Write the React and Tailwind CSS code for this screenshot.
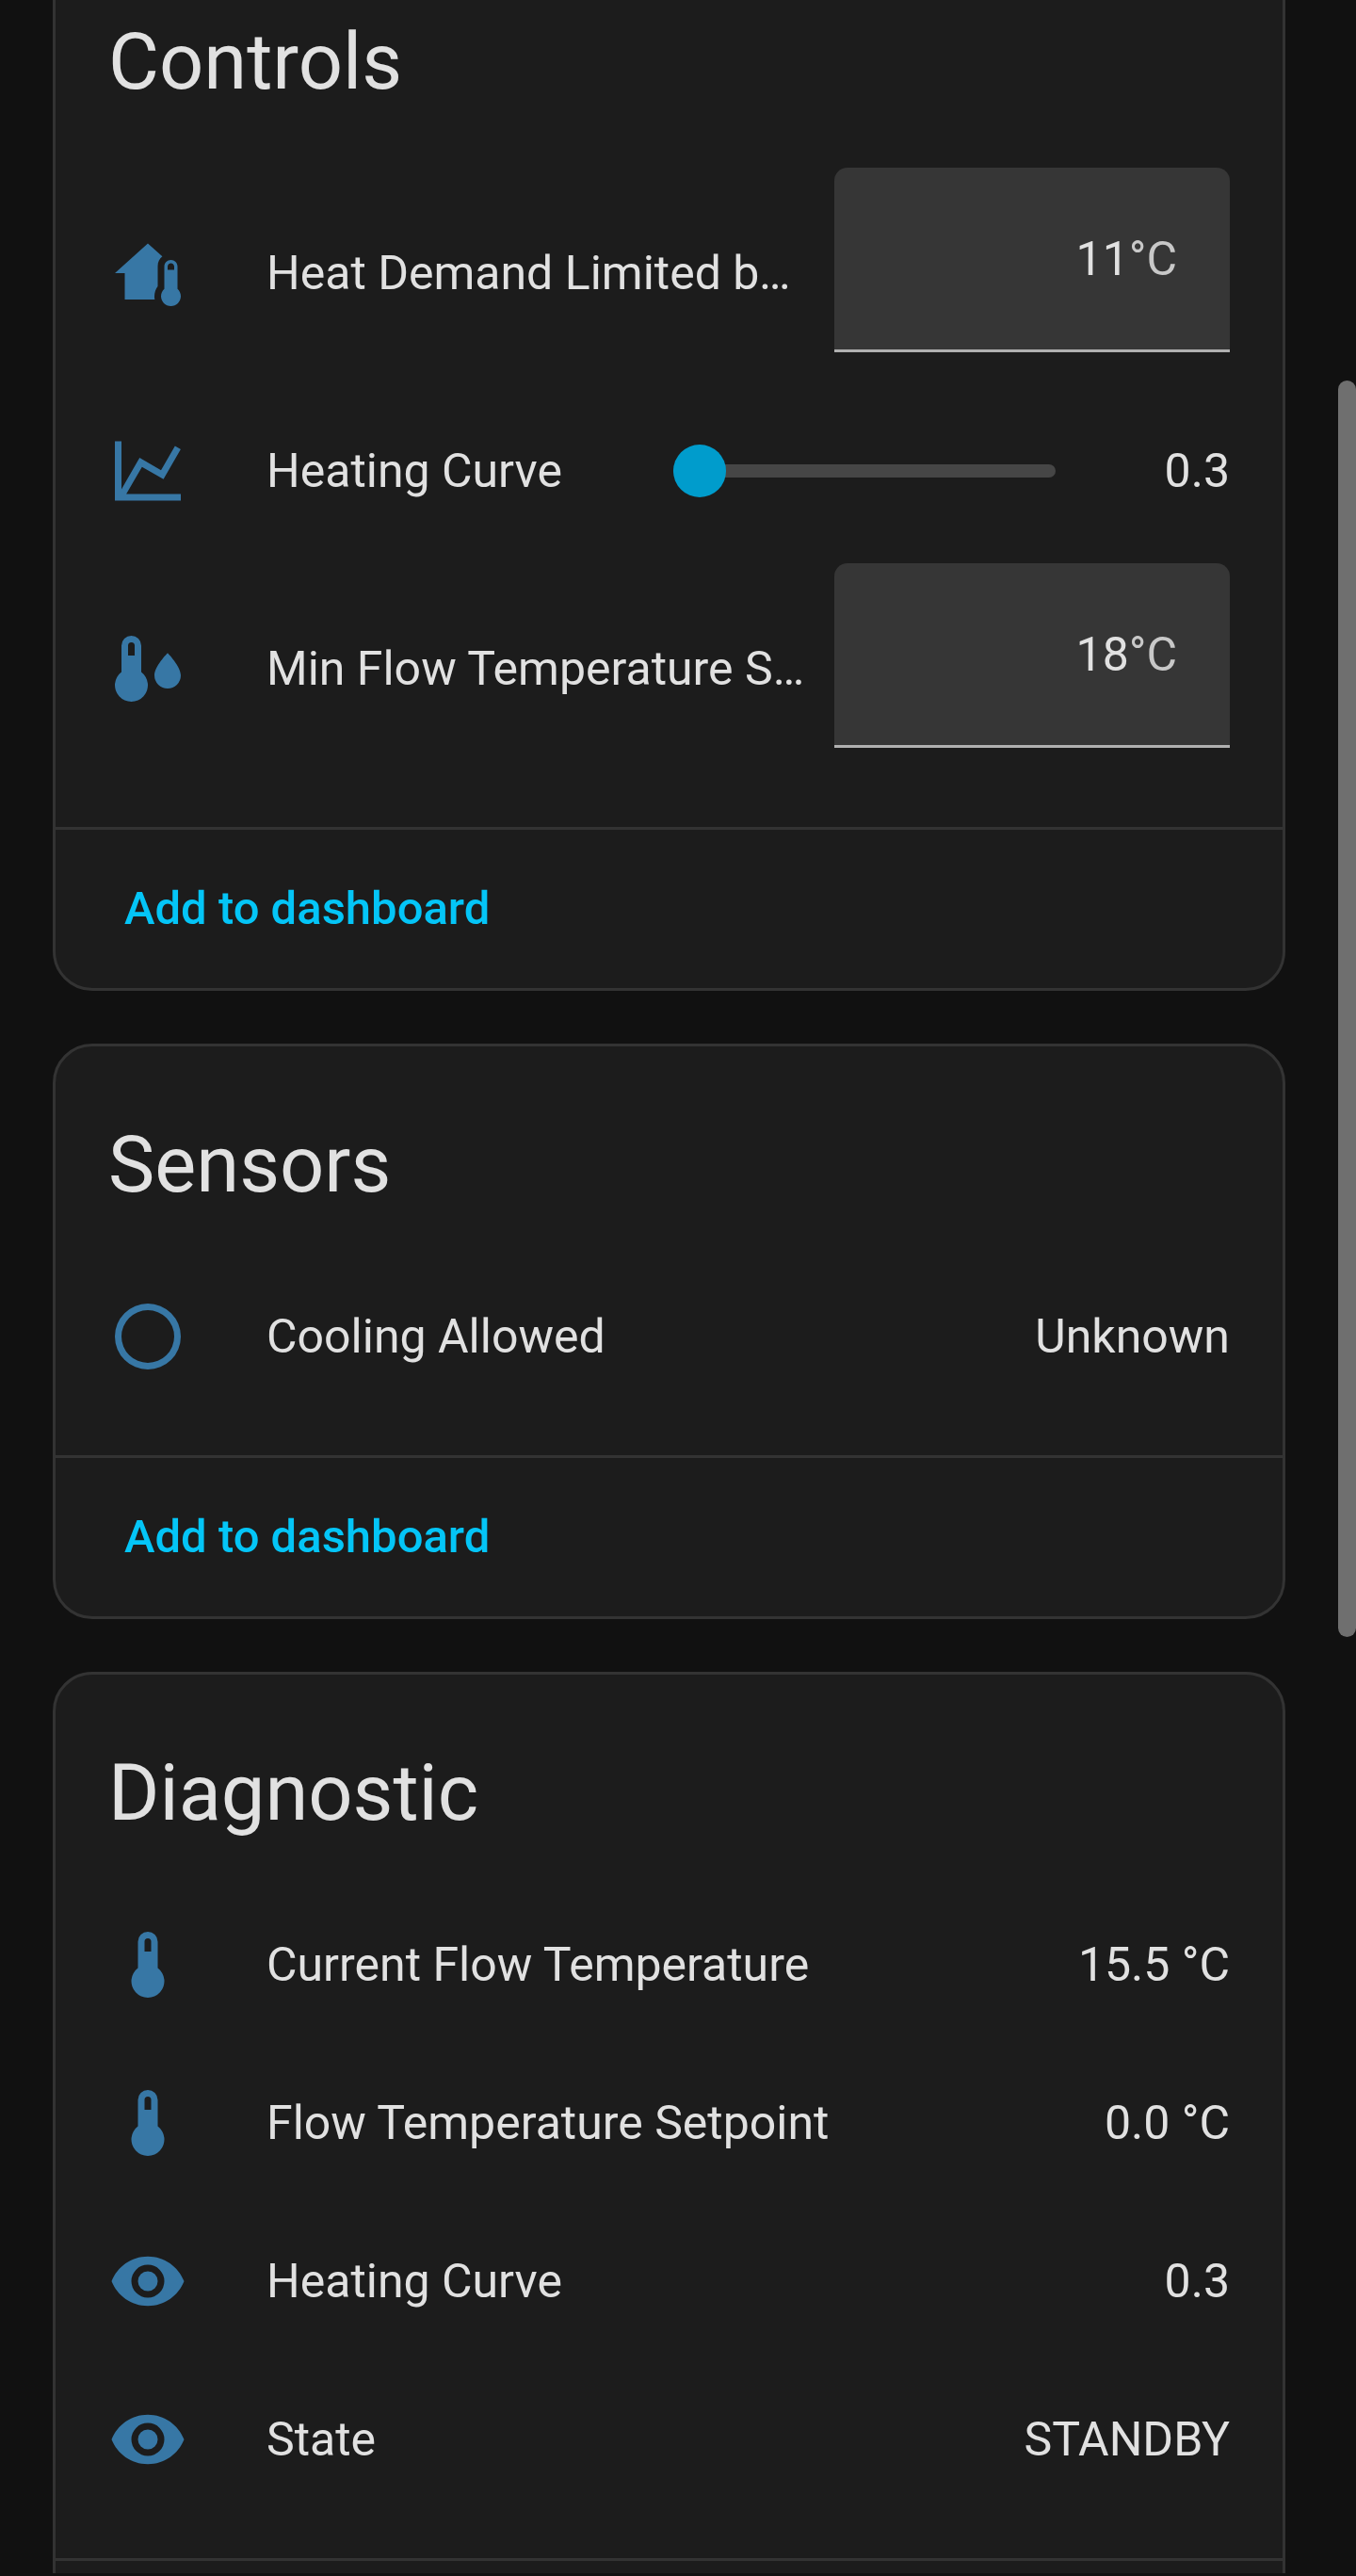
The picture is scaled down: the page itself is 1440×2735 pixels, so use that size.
import { useState } from "react";

/* ================= ICONS ================= */

const ICONS = {
  homeThermometer:
    "M19 8C20.11 8 21 8.9 21 10V16.76C21.61 17.31 22 18.11 22 19C22 20.66 20.66 22 19 22C17.34 22 16 20.66 16 19C16 18.11 16.39 17.31 17 16.76V10C17 8.9 17.9 8 19 8M19 9C18.45 9 18 9.45 18 10V11H20V10C20 9.45 19.55 9 19 9M12 3L2 12H5V20H14.1C14 19.7 14 19.3 14 19C14 17.9 14.4 16.8 15 16V10C15 8.7 15.5 7.6 16.4 6.96L12 3Z",
  chartLine:
    "M16 11.78L20.24 4.45L21.97 5.45L16.74 14.5L10.23 10.75L5.46 19H22V21H2V3H4V17.54L9.5 8L16 11.78Z",
  thermometerWater:
    "M10 13V5A3 3 0 0 0 4 5V13A5 5 0 1 0 10 13M7 4A1 1 0 0 1 8 5V8H6V5A1 1 0 0 1 7 4M18 7.2C18 7.2 14 11.3 14 14A4 4 0 0 0 22 14C22 11.3 18 7.2 18 7.2Z",
  circle:
    "M12 20A8 8 0 0 1 4 12A8 8 0 0 1 12 4A8 8 0 0 1 20 12A8 8 0 0 1 12 20M12 2A10 10 0 0 0 2 12A10 10 0 0 0 12 22A10 10 0 0 0 22 12A10 10 0 0 0 12 2Z",
  thermometer:
    "M15 13V5A3 3 0 0 0 9 5V13A5 5 0 1 0 15 13M12 4A1 1 0 0 1 13 5V8H11V5A1 1 0 0 1 12 4Z",
  eye: "M12 9A3 3 0 0 0 9 12A3 3 0 0 0 12 15A3 3 0 0 0 15 12A3 3 0 0 0 12 9M12 17A5 5 0 0 1 7 12A5 5 0 0 1 12 7A5 5 0 0 1 17 12A5 5 0 0 1 12 17M12 4.5C7 4.5 2.73 7.61 1 12C2.73 16.39 7 19.5 12 19.5C17 19.5 21.27 16.39 23 12C21.27 7.61 17 4.5 12 4.5Z",
};

function Icon({ name }) {
  return (
    <svg
      viewBox="0 0 24 24"
      aria-hidden="true"
      className="mr-[84px] size-[84px] shrink-0 fill-[#3777a5]"
    >
      <path fillRule="evenodd" d={ICONS[name]} />
    </svg>
  );
}

/* ================= CARD ================= */

function Card({ title, action, children }) {
  return (
    <section className="rounded-[42px] border-3 border-[#333333] bg-[#1c1c1c]">
      <h2 className="px-14 pt-[42px] pb-7 text-[83px] leading-[168px]">
        {title}
      </h2>
      <div className="flex flex-col gap-7 px-14 pb-14">{children}</div>
      <div className="flex min-h-[171px] items-center border-t-3 border-[#333333] px-7">
        {action && (
          <button
            type="button"
            className="h-[126px] cursor-pointer rounded-full px-[45px] text-[49px] font-medium text-[#04c5f7]"
          >
            {action}
          </button>
        )}
      </div>
    </section>
  );
}

/* ================= ROWS ================= */

function StateRow({ icon, name, value }) {
  return (
    <div className="flex h-[140px] items-center">
      <Icon name={icon} />
      <span className="min-w-0 flex-1 truncate">{name}</span>
      <span className="ml-7">{value}</span>
    </div>
  );
}

function NumberRow({ id, icon, name, unit, initial }) {
  const [value, setValue] = useState(initial);

  return (
    <div className="flex h-[224px] items-center">
      <Icon name={icon} />
      <label htmlFor={id} className="min-w-0 flex-1 truncate">
        {name}
      </label>
      <div className="ml-7 flex h-[196px] w-[420px] shrink-0 items-center self-start rounded-t-[14px] border-b-3 border-[#b0b0b0] bg-[#363636] px-14">
        <input
          id={id}
          type="text"
          inputMode="numeric"
          value={value}
          onChange={(e) => setValue(e.target.value)}
          className="min-w-0 flex-1 bg-transparent text-right outline-none"
        />
        <span className="text-[#c8c8c8]">{unit}</span>
      </div>
    </div>
  );
}

function SliderRow({ id, icon, name }) {
  const [value, setValue] = useState(0.3);

  return (
    <div className="flex h-[140px] items-center">
      <Icon name={icon} />
      <label htmlFor={id} className="min-w-0 flex-1 truncate">
        {name}
      </label>
      <input
        id={id}
        type="range"
        min="0.3"
        max="4"
        step="0.1"
        value={value}
        onChange={(e) => setValue(Number(e.target.value))}
        className="h-14 w-[406px] shrink-0 cursor-pointer appearance-none bg-transparent [&::-webkit-slider-runnable-track]:h-[14px] [&::-webkit-slider-runnable-track]:rounded-full [&::-webkit-slider-runnable-track]:bg-[#464646] [&::-webkit-slider-thumb]:-mt-[21px] [&::-webkit-slider-thumb]:size-14 [&::-webkit-slider-thumb]:appearance-none [&::-webkit-slider-thumb]:rounded-full [&::-webkit-slider-thumb]:bg-[#009ccc]"
      />
      <output htmlFor={id} className="w-[185px] text-right">
        {value.toFixed(1)}
      </output>
    </div>
  );
}

/* ================= PAGE ================= */

export default function App() {
  return (
    <div className="relative h-screen bg-[#111111] pb-[3px] font-['Roboto',sans-serif] text-[50px] leading-[70px] text-[#e1e1e1]">
      <main className="h-full overflow-hidden pr-[75px] pl-14">
        {/* the view is scrolled a little past the top of the first card */}
        <div className="-mt-[63px] flex flex-col gap-14">
          <Card title="Controls" action="Add to dashboard">
            <NumberRow
              id="heat-demand-limit"
              icon="homeThermometer"
              name="Heat Demand Limited by Outside"
              unit="°C"
              initial="11"
            />
            <SliderRow id="heating-curve" icon="chartLine" name="Heating Curve" />
            <NumberRow
              id="min-flow-temperature"
              icon="thermometerWater"
              name="Min Flow Temperature Setpoint"
              unit="°C"
              initial="18"
            />
          </Card>

          <Card title="Sensors" action="Add to dashboard">
            <StateRow icon="circle" name="Cooling Allowed" value="Unknown" />
          </Card>

          <Card title="Diagnostic">
            <StateRow
              icon="thermometer"
              name="Current Flow Temperature"
              value="15.5 °C"
            />
            <StateRow
              icon="thermometer"
              name="Flow Temperature Setpoint"
              value="0.0 °C"
            />
            <StateRow icon="eye" name="Heating Curve" value="0.3" />
            <StateRow icon="eye" name="State" value="STANDBY" />
          </Card>
        </div>
      </main>

      {/* SCROLLBAR */}
      <div className="absolute top-[404px] right-0 h-[1334px] w-[19px] rounded-full bg-[#6f6f6f]" />
    </div>
  );
}
